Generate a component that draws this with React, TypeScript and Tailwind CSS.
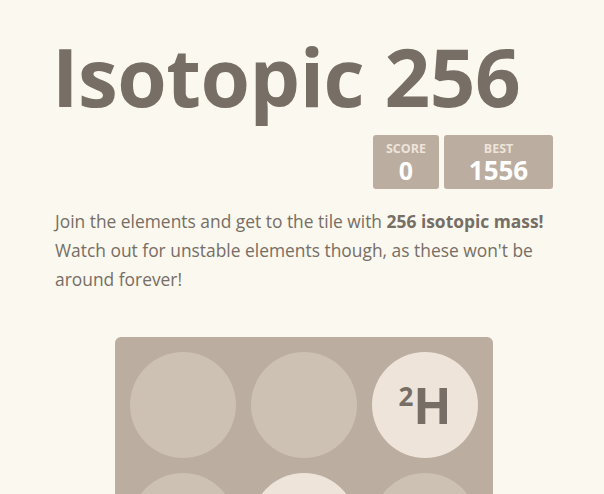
import React from "react";

function Cell({ el, mass }: { el?: string; mass?: number }) {
  if (!el) {
    return <div className="w-[106px] h-[106px] rounded-full bg-[#cdc1b4]" />;
  }
  return (
    <div className="w-[106px] h-[106px] rounded-full bg-[#eee4da] flex items-center justify-center text-[#776e65] font-bold">
      <span className="flex items-start leading-none">
        <span className="text-[26px] mt-[-2px]">{mass}</span>
        <span className="text-[50px] leading-[40px]">{el}</span>
      </span>
    </div>
  );
}

export default function App() {
  const cells: { el?: string; mass?: number }[] = [
    {}, {}, { el: "H", mass: 2 },
    {}, { el: "H", mass: 1 }, {},
    {}, {}, {},
  ];
  return (
    <div
      className="min-h-[494px] bg-[#faf8ef] text-[#776e65]"
      style={{ fontFamily: '"Open Sans", "Noto Sans", sans-serif' }}
    >
      <div className="w-[500px] ml-[52px] pt-[24px]">
        <h1 className="text-[80px] font-bold leading-[104px] tracking-[-0.5px]">Isotopic 256</h1>
        <div className="flex justify-end gap-[5px] mt-[7px] mr-[-1px]">
          <div className="w-[66px] h-[54px] rounded-[3px] bg-[#bbada0] flex flex-col items-center pt-[7px]">
            <div className="text-[12.5px] font-bold text-[#eee4da] leading-[14px] uppercase">Score</div>
            <div className="text-[25px] font-bold text-white leading-[26px] mt-[1px]">0</div>
          </div>
          <div className="w-[109px] h-[54px] rounded-[3px] bg-[#bbada0] flex flex-col items-center pt-[7px]">
            <div className="text-[12.5px] font-bold text-[#eee4da] leading-[14px] uppercase">Best</div>
            <div className="text-[26px] font-bold text-white leading-[26px] mt-[1px]">1556</div>
          </div>
        </div>
        <p className="mt-[18px] ml-[3px] text-[17.4px] leading-[29px]">
          Join the elements and get to the tile with <b>256 isotopic mass!</b> Watch out for unstable elements though, as these won't be around forever!
        </p>
      </div>
      <div className="ml-[115px] mt-[43px] w-[378px] rounded-[6px] bg-[#bbada0] p-[15px] grid grid-cols-3 gap-[15px]">
        {cells.map((c, i) => (
          <Cell key={i} el={c.el} mass={c.mass} />
        ))}
      </div>
    </div>
  );
}
